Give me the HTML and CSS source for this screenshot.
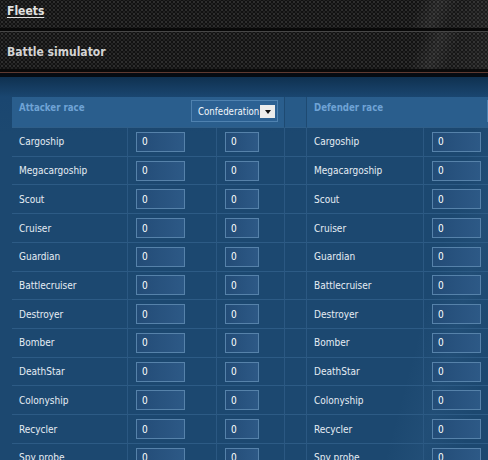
FILE: index.html
```html
<!DOCTYPE html>
<html>
<head>
<meta charset="utf-8">
<title>Battle simulator</title>
<link rel="stylesheet" href="styles.css">
</head>
<body>
<div class="bar fleets"><a class="fleets-link" href="#">Fleets</a></div>
<div class="bar sim">Battle simulator</div>
<div class="panel">
  <div class="sim-grid">
    <div class="head att"><span class="head-title">Attacker race</span><div class="select"><span class="select-text">Confederation</span><span class="select-arrow"></span></div></div>
    <div class="head gap"></div>
    <div class="head def"><span class="head-title">Defender race</span><div class="select"><span class="select-text">Confederation</span><span class="select-arrow"></span></div></div>

    <div class="cell label">Cargoship</div><div class="cell"><input class="num" value="0"></div><div class="cell"><input class="num small" value="0"></div><div class="cell gap"></div><div class="cell label">Cargoship</div><div class="cell"><input class="num" value="0"></div><div class="cell"><input class="num small" value="0"></div>

    <div class="cell label">Megacargoship</div><div class="cell"><input class="num" value="0"></div><div class="cell"><input class="num small" value="0"></div><div class="cell gap"></div><div class="cell label">Megacargoship</div><div class="cell"><input class="num" value="0"></div><div class="cell"><input class="num small" value="0"></div>

    <div class="cell label">Scout</div><div class="cell"><input class="num" value="0"></div><div class="cell"><input class="num small" value="0"></div><div class="cell gap"></div><div class="cell label">Scout</div><div class="cell"><input class="num" value="0"></div><div class="cell"><input class="num small" value="0"></div>

    <div class="cell label">Cruiser</div><div class="cell"><input class="num" value="0"></div><div class="cell"><input class="num small" value="0"></div><div class="cell gap"></div><div class="cell label">Cruiser</div><div class="cell"><input class="num" value="0"></div><div class="cell"><input class="num small" value="0"></div>

    <div class="cell label">Guardian</div><div class="cell"><input class="num" value="0"></div><div class="cell"><input class="num small" value="0"></div><div class="cell gap"></div><div class="cell label">Guardian</div><div class="cell"><input class="num" value="0"></div><div class="cell"><input class="num small" value="0"></div>

    <div class="cell label">Battlecruiser</div><div class="cell"><input class="num" value="0"></div><div class="cell"><input class="num small" value="0"></div><div class="cell gap"></div><div class="cell label">Battlecruiser</div><div class="cell"><input class="num" value="0"></div><div class="cell"><input class="num small" value="0"></div>

    <div class="cell label">Destroyer</div><div class="cell"><input class="num" value="0"></div><div class="cell"><input class="num small" value="0"></div><div class="cell gap"></div><div class="cell label">Destroyer</div><div class="cell"><input class="num" value="0"></div><div class="cell"><input class="num small" value="0"></div>

    <div class="cell label">Bomber</div><div class="cell"><input class="num" value="0"></div><div class="cell"><input class="num small" value="0"></div><div class="cell gap"></div><div class="cell label">Bomber</div><div class="cell"><input class="num" value="0"></div><div class="cell"><input class="num small" value="0"></div>

    <div class="cell label">DeathStar</div><div class="cell"><input class="num" value="0"></div><div class="cell"><input class="num small" value="0"></div><div class="cell gap"></div><div class="cell label">DeathStar</div><div class="cell"><input class="num" value="0"></div><div class="cell"><input class="num small" value="0"></div>

    <div class="cell label">Colonyship</div><div class="cell"><input class="num" value="0"></div><div class="cell"><input class="num small" value="0"></div><div class="cell gap"></div><div class="cell label">Colonyship</div><div class="cell"><input class="num" value="0"></div><div class="cell"><input class="num small" value="0"></div>

    <div class="cell label">Recycler</div><div class="cell"><input class="num" value="0"></div><div class="cell"><input class="num small" value="0"></div><div class="cell gap"></div><div class="cell label">Recycler</div><div class="cell"><input class="num" value="0"></div><div class="cell"><input class="num small" value="0"></div>

    <div class="cell label">Spy probe</div><div class="cell"><input class="num" value="0"></div><div class="cell"><input class="num small" value="0"></div><div class="cell gap"></div><div class="cell label">Spy probe</div><div class="cell"><input class="num" value="0"></div><div class="cell"><input class="num small" value="0"></div>
  </div>
</div>
</body>
</html>
```
FILE: styles.css
```css
html, body {
  margin: 0;
  padding: 0;
  background: #1c4870;
  overflow: hidden;
}
body {
  width: 488px;
  height: 460px;
  font-family: "DejaVu Sans Condensed", "DejaVu Sans", sans-serif;
  font-stretch: condensed;
}
.bar {
  background:
    linear-gradient(112deg, transparent 0 84%, rgba(255,255,255,0.07) 88%, rgba(255,255,255,0.015) 92%, rgba(255,255,255,0.05) 100%),
    radial-gradient(circle, #2e2e2e 0 0.9px, transparent 1.5px) 0 0 / 4px 4px,
    radial-gradient(circle, #232323 0 0.9px, transparent 1.5px) 2px 2px / 4px 4px,
    #121212;
  color: #dcdcdc;
  font-weight: bold;
  font-size: 12px;
  line-height: 14px;
  padding-left: 7px;
  box-sizing: border-box;
}
.fleets {
  height: 31px;
  padding-top: 4px;
  border-bottom: 3px solid #080808;
  box-shadow: 0 1px 0 #474747;
  position: relative;
}
.fleets-link {
  color: #e2e2e2;
  text-decoration: underline;
  text-underline-offset: 2px;
}
.sim {
  margin-top: 1px;
  height: 40px;
  padding-top: 13px;
  border-bottom: 3px solid #0a0a0a;
  color: #d4d4d4;
}
.panel {
  border-top: 1px solid #5e3a31;
  margin-top: 0;
  padding: 24px 0 0 12px;
  background:
    linear-gradient(105deg, transparent 0 82%, rgba(120,170,220,0.06) 88%, transparent 95%),
    linear-gradient(to bottom, #050b12 0 4px, #0f3150 4px, #1a4670 24px, #1c4870 60px);
}
.sim-grid {
  display: grid;
  grid-template-columns: 116px 89px 68px 22px 117px 89px 68px;
  grid-template-rows: 31px;
  grid-auto-rows: 28.73px;
  width: 569px;
}
.head {
  background: #2a5e8d;
  border-right: 1px solid #1e4a72;
  border-bottom: 1px solid #2f5e88;
  box-sizing: border-box;
  display: flex;
  justify-content: space-between;
  align-items: flex-start;
  padding: 4px 6px 0 7px;
}
.head.att, .head.def {
  grid-column: span 3;
}
.head.gap {
  background: #275a88;
}
.head-title {
  color: #6fa3d5;
  font-weight: bold;
  font-size: 9.6px;
  line-height: 13px;
}
.select {
  margin-top: -1px;
  width: 87px;
  height: 22px;
  box-sizing: border-box;
  border: 1px solid #4f82b0;
  background: #2c6193;
  display: flex;
  align-items: center;
  justify-content: space-between;
  padding: 0 2px 0 6px;
  flex: none;
}
.select-text {
  color: #f2f6fa;
  font-size: 9.6px;
}
.select-arrow {
  width: 15px;
  height: 13px;
  background: #ececec;
  display: flex;
  align-items: center;
  justify-content: center;
}
.select-arrow::after {
  content: "";
  margin-top: 2px;
  border-left: 3.5px solid transparent;
  border-right: 3.5px solid transparent;
  border-top: 4px solid #111;
}
.cell {
  border-right: 1px solid #2b5882;
  border-bottom: 1px solid #2d5b85;
  box-sizing: border-box;
  display: flex;
  align-items: center;
  padding-left: 8px;
}
.cell.label {
  padding-left: 7px;
  color: #e6edf4;
  font-size: 10px;
}
.num {
  width: 49px;
  height: 20px;
  box-sizing: border-box;
  border: 1px solid #5682aa;
  background: linear-gradient(to right, #234c77, #2d5986);
  color: #ffffff;
  font-family: "DejaVu Sans Condensed", "DejaVu Sans", sans-serif;
  font-stretch: condensed;
  font-size: 10px;
  padding: 0 0 0 5px;
  margin: 0;
  outline: none;
}
.num.small {
  width: 34px;
}
```
